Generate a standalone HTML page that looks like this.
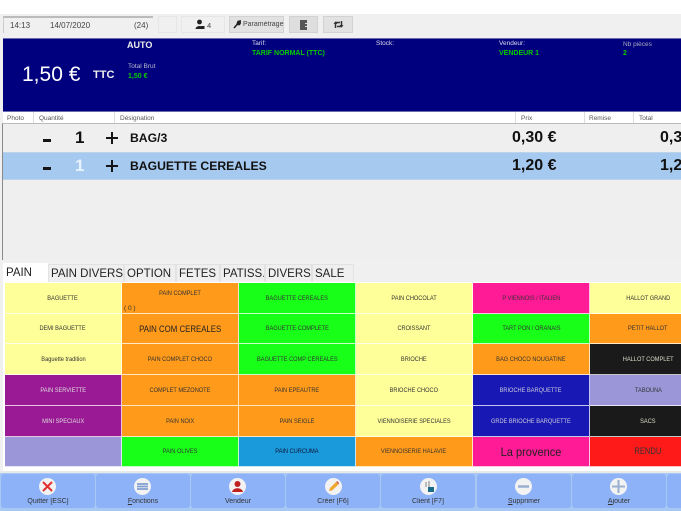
<!DOCTYPE html>
<html><head><meta charset="utf-8">
<style>
html,body{margin:0;padding:0;background:#fff}
body{width:681px;height:511px;position:relative;overflow:hidden;font-family:"Liberation Sans",sans-serif;color:#222}
.a{position:absolute;white-space:nowrap}
.t{filter:blur(.35px)}
.cell{position:absolute;box-sizing:border-box;display:flex;align-items:center;justify-content:center;font-size:6.5px;color:#333;border:1px solid rgba(255,255,255,.75);border-width:0 1px 1px 0;white-space:nowrap}
.cell span{display:inline-block;transform:scaleX(.87);filter:blur(.3px)}
.tab{position:absolute;top:264px;height:18px;box-sizing:border-box;background:#efefef;border:1px solid #e2e2e2;border-bottom:0;font-size:11.5px;line-height:18px;padding-left:2px;color:#222;white-space:nowrap;overflow:hidden}
.bb{position:absolute;top:474px;height:34px;background:#8db2f7;border-radius:3px;width:94px}
.bl{position:absolute;top:24px;font-size:7px;color:#333;width:94px;text-align:center;left:0}
.ic{position:absolute;top:478px;width:17px;height:17px;border-radius:50%;background:#f2f2f2}
.h{position:absolute;top:115px;font-size:6.5px;color:#555;white-space:nowrap}
.sep{position:absolute;top:112px;height:11px;width:1px;background:#ddd}
.bar{position:absolute;background:#151515}
</style></head><body>

<!-- window background -->
<div class="a" style="left:0;top:14px;width:681px;height:497px;background:#f0f0f0"></div>

<!-- toolbar -->
<div class="a" style="left:3px;top:16px;width:150px;height:17px;background:#f0f0f0;border-top:2px solid #bbb;border-left:1px solid #ccc;box-sizing:border-box"></div>
<div class="a t" style="left:10px;top:21px;font-size:8px;color:#444">14:13</div>
<div class="a t" style="left:50px;top:21px;font-size:8px;color:#444">14/07/2020</div>
<div class="a t" style="left:134px;top:21px;font-size:8px;color:#444">(24)</div>
<div class="a" style="left:158px;top:16px;width:19px;height:17px;border:1px solid #e6e6e6;box-sizing:border-box"></div>
<div class="a" style="left:181px;top:16px;width:44px;height:17px;border:1px solid #e6e6e6;box-sizing:border-box"></div>
<svg class="a t" style="left:195px;top:19px" width="10" height="11" viewBox="0 0 10 11"><circle cx="4.500" cy="3" r="2.400" fill="#222"/><path d="M0.500 10 C1 6 8 6 8.500 10Z" fill="#222"/><rect x="6" y="7" width="3.500" height="3" fill="#222"/></svg>
<div class="a t" style="left:207px;top:21px;font-size:7.500px;color:#444">4</div>
<div class="a" style="left:229px;top:16px;width:55px;height:17px;background:#e2e2e2;border:1px solid #d2d2d2;box-sizing:border-box"></div>
<svg class="a t" style="left:233px;top:20px" width="8" height="9" viewBox="0 0 8 9"><path d="M1 8 L4.500 4 M4 4.500 L5 1.500 L7 1 L6 3 L7.500 2.500 L6.500 4.500Z" stroke="#222" stroke-width="1.500" fill="#222"/></svg>
<div class="a t" style="left:243px;top:21px;font-size:7px;color:#444">Paramétrage</div>
<div class="a" style="left:289px;top:16px;width:29px;height:17px;background:#dedede;border:1px solid #d2d2d2;box-sizing:border-box"></div>
<svg class="a t" style="left:300px;top:20px" width="8" height="10" viewBox="0 0 8 10"><path d="M0 0 H7 V3 H5 V4 H7 V6 H5 V7 H7 V10 H0Z" fill="#555"/></svg>
<div class="a" style="left:323px;top:16px;width:30px;height:17px;background:#e2e2e2;border:1px solid #d2d2d2;box-sizing:border-box"></div>
<svg class="a t" style="left:333px;top:20px" width="11" height="9" viewBox="0 0 11 9"><path d="M2.500 8 V2.500 H7 M8.500 1 V6.500 H4" stroke="#333" stroke-width="1.500" fill="none"/><path d="M0.500 4 L2.500 1.500 L4.500 4Z M6.500 5 L8.500 7.500 L10.500 5Z" fill="#333"/></svg>

<!-- blue panel -->
<div class="a" style="left:3px;top:38px;width:678px;height:74px;background:#00007f;border-top:1px solid #6a6ab0;border-bottom:1px solid #6a6ab0;box-sizing:border-box"></div>
<div class="a t" style="left:127px;top:40px;font-size:9px;font-weight:bold;color:#eee">AUTO</div>
<div class="a t" style="left:22px;top:63px;font-size:21px;color:#fff">1,50 €</div>
<div class="a t" style="left:93px;top:69px;font-size:11px;font-weight:bold;color:#eee">TTC</div>
<div class="a t" style="left:128px;top:63px;font-size:6.500px;color:#bbc">Total Brut</div>
<div class="a t" style="left:128px;top:73px;font-size:7px;font-weight:bold;color:#0c0">1,50 €</div>
<div class="a t" style="left:252px;top:40px;font-size:6.500px;color:#dde">Tarif:</div>
<div class="a t" style="left:252px;top:50px;font-size:7px;font-weight:bold;color:#0c0">TARIF NORMAL (TTC)</div>
<div class="a t" style="left:376px;top:40px;font-size:6.500px;color:#dde">Stock:</div>
<div class="a t" style="left:499px;top:40px;font-size:6.500px;color:#dde">Vendeur:</div>
<div class="a t" style="left:499px;top:50px;font-size:7px;font-weight:bold;color:#0c0">VENDEUR 1</div>
<div class="a t" style="left:623px;top:41px;font-size:6.500px;color:#aab">Nb pièces</div>
<div class="a t" style="left:623px;top:50px;font-size:7px;font-weight:bold;color:#0c0">2</div>

<!-- list header -->
<div class="a" style="left:3px;top:112px;width:678px;height:11px;background:#fff"></div>
<div class="h t" style="left:7px">Photo</div><div class="sep" style="left:33px"></div>
<div class="h t" style="left:39px">Quantité</div><div class="sep" style="left:114px"></div>
<div class="h t" style="left:120px">Désignation</div><div class="sep" style="left:515px"></div>
<div class="h t" style="left:521px">Prix</div><div class="sep" style="left:584px"></div>
<div class="h t" style="left:589px">Remise</div><div class="sep" style="left:633px"></div>
<div class="h t" style="left:639px">Total</div>

<!-- list -->
<div class="a" style="left:2px;top:123px;width:679px;height:137px;background:#efefef;border-top:1px solid #bbb;border-left:1px solid #8a8a8a;box-sizing:border-box"></div>
<div class="a" style="left:3px;top:152px;width:678px;height:28px;background:#a6c9ef;border-top:1px solid #bcd3ea;border-bottom:1px solid #bcd3ea;box-sizing:border-box"></div>

<div class="bar t" style="left:43px;top:139px;width:8px;height:3px"></div>
<div class="a t" style="left:75px;top:128px;font-size:17px;font-weight:bold;color:#111">1</div>
<div class="bar t" style="left:106px;top:137px;width:12px;height:2px"></div>
<div class="bar t" style="left:111px;top:132px;width:2px;height:12px"></div>
<div class="a t" style="left:130px;top:131px;font-size:12.200px;font-weight:bold;color:#111">BAG/3</div>
<div class="a t" style="left:512px;top:129px;font-size:16px;font-weight:bold;color:#111">0,30 €</div>
<div class="a t" style="left:660px;top:129px;font-size:16px;font-weight:bold;color:#111">0,3</div>

<div class="bar t" style="left:43px;top:167px;width:8px;height:3px"></div>
<div class="a t" style="left:75px;top:156px;font-size:17px;font-weight:bold;color:#e8f2ff">1</div>
<div class="bar t" style="left:106px;top:165px;width:12px;height:2px"></div>
<div class="bar t" style="left:111px;top:160px;width:2px;height:12px"></div>
<div class="a t" style="left:130px;top:159px;font-size:12.200px;font-weight:bold;color:#111">BAGUETTE CEREALES</div>
<div class="a t" style="left:512px;top:157px;font-size:16px;font-weight:bold;color:#111">1,20 €</div>
<div class="a t" style="left:660px;top:157px;font-size:16px;font-weight:bold;color:#111">1,2</div>

<!-- tabs area -->
<div class="a" style="left:3px;top:282px;width:678px;height:189px;background:#fff"></div>
<div class="tab t" style="left:3px;width:45px;background:#fff;top:263px;height:20px;border-color:#fff;line-height:19px">PAIN</div>
<div class="tab t" style="left:48px;width:76px">PAIN DIVERS</div>
<div class="tab t" style="left:124px;width:52px">OPTION</div>
<div class="tab t" style="left:176px;width:44px">FETES</div>
<div class="tab t" style="left:220px;width:45px">PATISS.</div>
<div class="tab t" style="left:265px;width:47px">DIVERS</div>
<div class="tab t" style="left:312px;width:42px">SALE</div>

<!-- grid -->
<div class="cell" style="left:5px;top:283px;width:117px;height:31px;background:#ffff99"><span>BAGUETTE</span></div>
<div class="cell" style="left:122px;top:283px;width:117px;height:31px;background:#ff9a1a;align-items:flex-start;padding-top:7px"><span>PAIN COMPLET</span></div>
<div class="a t" style="left:124px;top:305px;font-size:6.500px;color:#333">( 0 )</div>
<div class="cell" style="left:239px;top:283px;width:117px;height:31px;background:#18ff18"><span>BAGUETTE CEREALES</span></div>
<div class="cell" style="left:356px;top:283px;width:117px;height:31px;background:#ffff99"><span>PAIN CHOCOLAT</span></div>
<div class="cell" style="left:473px;top:283px;width:117px;height:31px;background:#ff1a96"><span>P VIENNOIS / ITALIEN</span></div>
<div class="cell" style="left:590px;top:283px;width:117px;height:31px;background:#ffff99"><span>HALLOT GRAND</span></div>

<div class="cell" style="left:5px;top:314px;width:117px;height:30px;background:#ffff99"><span>DEMI BAGUETTE</span></div>
<div class="cell" style="left:122px;top:314px;width:117px;height:30px;background:#ff9a1a;font-size:9px;color:#222"><span>PAIN COM CEREALES</span></div>
<div class="cell" style="left:239px;top:314px;width:117px;height:30px;background:#18ff18"><span>BAGUETTE COMPLETE</span></div>
<div class="cell" style="left:356px;top:314px;width:117px;height:30px;background:#ffff99"><span>CROISSANT</span></div>
<div class="cell" style="left:473px;top:314px;width:117px;height:30px;background:#18ff18"><span>TART PON / ORANAIS</span></div>
<div class="cell" style="left:590px;top:314px;width:117px;height:30px;background:#ff9a1a"><span>PETIT HALLOT</span></div>

<div class="cell" style="left:5px;top:344px;width:117px;height:31px;background:#ffff99"><span>Baguette tradition</span></div>
<div class="cell" style="left:122px;top:344px;width:117px;height:31px;background:#ff9a1a"><span>PAIN COMPLET CHOCO</span></div>
<div class="cell" style="left:239px;top:344px;width:117px;height:31px;background:#18ff18"><span>BAGUETTE COMP CEREALES</span></div>
<div class="cell" style="left:356px;top:344px;width:117px;height:31px;background:#ffff99"><span>BRIOCHE</span></div>
<div class="cell" style="left:473px;top:344px;width:117px;height:31px;background:#ff9a1a"><span>BAG CHOCO NOUGATINE</span></div>
<div class="cell" style="left:590px;top:344px;width:117px;height:31px;background:#1a1a1a;color:#ddc"><span>HALLOT COMPLET</span></div>

<div class="cell" style="left:5px;top:375px;width:117px;height:31px;background:#9a1a96;color:#ddd"><span>PAIN SERVIETTE</span></div>
<div class="cell" style="left:122px;top:375px;width:117px;height:31px;background:#ff9a1a"><span>COMPLET MEZONOTE</span></div>
<div class="cell" style="left:239px;top:375px;width:117px;height:31px;background:#ff9a1a"><span>PAIN EPEAUTRE</span></div>
<div class="cell" style="left:356px;top:375px;width:117px;height:31px;background:#ffff99"><span>BRIOCHE CHOCO</span></div>
<div class="cell" style="left:473px;top:375px;width:117px;height:31px;background:#1818b4;color:#ccd"><span>BRIOCHE BARQUETTE</span></div>
<div class="cell" style="left:590px;top:375px;width:117px;height:31px;background:#9a96d8"><span>TABOUNA</span></div>

<div class="cell" style="left:5px;top:406px;width:117px;height:31px;background:#9a1a96;color:#ddd"><span>MINI SPECIAUX</span></div>
<div class="cell" style="left:122px;top:406px;width:117px;height:31px;background:#ff9a1a"><span>PAIN NOIX</span></div>
<div class="cell" style="left:239px;top:406px;width:117px;height:31px;background:#ff9a1a"><span>PAIN SEIGLE</span></div>
<div class="cell" style="left:356px;top:406px;width:117px;height:31px;background:#ffff99"><span>VIENNOISERIE SPECIALES</span></div>
<div class="cell" style="left:473px;top:406px;width:117px;height:31px;background:#1818b4;color:#ccd"><span>GRDE BRIOCHE BARQUETTE</span></div>
<div class="cell" style="left:590px;top:406px;width:117px;height:31px;background:#1a1a1a;color:#ddc"><span>SACS</span></div>

<div class="cell" style="left:5px;top:437px;width:117px;height:30px;background:#9a96d8"></div>
<div class="cell" style="left:122px;top:437px;width:117px;height:30px;background:#18ff18"><span>PAIN OLIVES</span></div>
<div class="cell" style="left:239px;top:437px;width:117px;height:30px;background:#1a9ada;color:#113"><span>PAIN CURCUMA</span></div>
<div class="cell" style="left:356px;top:437px;width:117px;height:30px;background:#ff9a1a"><span>VIENNOISERIE HALAVIE</span></div>
<div class="cell" style="left:473px;top:437px;width:117px;height:30px;background:#ff1a96;font-size:12px;color:#222"><span style="transform:scaleX(.92)">La provence</span></div>
<div class="cell" style="left:590px;top:437px;width:117px;height:30px;background:#ff1a1a;font-size:9.500px"><span style="transform:scaleX(.8)">RENDU</span></div>

<!-- bottom bar -->
<div class="a" style="left:0;top:471px;width:681px;height:2px;background:#e8e8e8"></div>
<div class="a" style="left:0;top:473px;width:681px;height:38px;background:#a8c8f4"></div>
<div class="bb" style="left:1px"><div class="bl t">Quitter [ESC]</div></div>
<div class="bb" style="left:96px"><div class="bl t"><u>F</u>onctions</div></div>
<div class="bb" style="left:191px"><div class="bl t">Vendeur</div></div>
<div class="bb" style="left:286px"><div class="bl t">Créer [F6]</div></div>
<div class="bb" style="left:381px"><div class="bl t">Client [F7]</div></div>
<div class="bb" style="left:477px"><div class="bl t"><u>S</u>upprimer</div></div>
<div class="bb" style="left:572px"><div class="bl t"><u>A</u>jouter</div></div>
<div class="bb" style="left:667px"></div>

<div class="ic t" style="left:39px"></div>
<svg class="a t" style="left:39px;top:478px" width="17" height="17" viewBox="0 0 17 17"><path d="M4 4 L13 13 M13 4 L4 13" stroke="#e03030" stroke-width="2"/></svg>
<div class="ic t" style="left:134px"></div>
<svg class="a t" style="left:134px;top:478px" width="17" height="17" viewBox="0 0 17 17"><path d="M3 6 H14 M3 8.500 H14 M3 11 H14" stroke="#7f9fd0" stroke-width="1.800"/></svg>
<div class="ic t" style="left:229px"></div>
<svg class="a t" style="left:229px;top:478px" width="17" height="17" viewBox="0 0 17 17"><circle cx="8.500" cy="6" r="3" fill="#c02020"/><path d="M3 14 C4 9 13 9 14 14Z" fill="#c02020"/></svg>
<div class="ic t" style="left:325px"></div>
<svg class="a t" style="left:325px;top:478px" width="17" height="17" viewBox="0 0 17 17"><path d="M4 13 L5 10 L11 4 L13.500 6.500 L7 12.500Z" fill="#f0a830"/><path d="M11 4 L12.500 3 L14 5 L13.500 6.500Z" fill="#d06060"/></svg>
<div class="ic t" style="left:420px"></div>
<svg class="a t" style="left:420px;top:478px" width="17" height="17" viewBox="0 0 17 17"><path d="M5 4 H7 V9 H5Z M8 3 H10 V9 H8Z" fill="#bbb"/><rect x="8" y="9" width="6" height="5" fill="#1a6a8a"/></svg>
<div class="ic t" style="left:515px"></div>
<svg class="a t" style="left:515px;top:478px" width="17" height="17" viewBox="0 0 17 17"><path d="M3 8.500 H14" stroke="#9ab0d0" stroke-width="2.500"/></svg>
<div class="ic t" style="left:610px"></div>
<svg class="a t" style="left:610px;top:478px" width="17" height="17" viewBox="0 0 17 17"><path d="M2 8.500 H15 M8.500 2 V15" stroke="#9ab0d0" stroke-width="2"/></svg>
</body></html>
